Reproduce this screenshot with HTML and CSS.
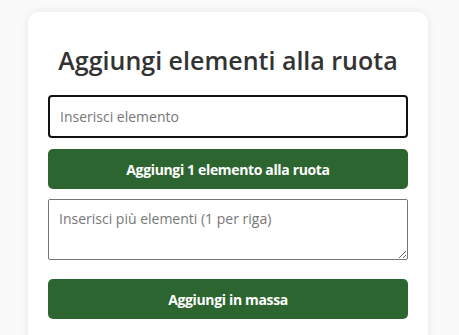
FILE: index.html
```html
<!DOCTYPE html>
<html lang="it">
<head>
<meta charset="utf-8">
<title>Aggiungi elementi alla ruota</title>
<link rel="stylesheet" href="styles.css">
</head>
<body>
<div class="card">
  <h2 class="title">Aggiungi elementi alla ruota</h2>
  <input class="field" type="text" placeholder="Inserisci elemento">
  <button class="btn btn-single">Aggiungi 1 elemento alla ruota</button>
  <textarea class="area" placeholder="Inserisci più elementi (1 per riga)"></textarea>
  <button class="btn btn-bulk">Aggiungi in massa</button>
</div>
</body>
</html>
```
FILE: styles.css
```css
html, body {
  margin: 0;
  padding: 0;
  background: #f9f9f9;
  font-family: "Open Sans", "Noto Sans", sans-serif;
}
.card {
  box-sizing: border-box;
  width: 400px;
  margin: 12px 0 0 28px;
  padding: 20px 20px 30px;
  background: #fff;
  border-radius: 10px;
  box-shadow: 0 0 10px rgba(0, 0, 0, 0.06);
  display: flex;
  flex-direction: column;
}
.title {
  margin: 10px 0 17px;
  font-size: 25px;
  font-weight: 600;
  line-height: 36px;
  color: #333;
  text-align: center;
}
.field {
  box-sizing: border-box;
  height: 43px;
  margin: 0;
  padding: 0 10px;
  border: 2px solid #111;
  border-radius: 4px;
  font-family: inherit;
  font-size: 14px;
  color: #333;
  outline: none;
}
.field::placeholder, .area::placeholder {
  color: #777;
}
.btn {
  box-sizing: border-box;
  height: 40px;
  border: none;
  border-radius: 5px;
  background: #2c6530;
  color: #fff;
  font-family: inherit;
  font-size: 14px;
  font-weight: 700;
  letter-spacing: -0.35px;
}
.btn-single {
  margin-top: 11px;
}
.area {
  box-sizing: border-box;
  height: 61px;
  margin-top: 10px;
  padding: 9px 10px;
  border: 1px solid #767676;
  border-radius: 2px;
  font-family: inherit;
  font-size: 14px;
}
.btn-bulk {
  margin-top: 19px;
}
```
